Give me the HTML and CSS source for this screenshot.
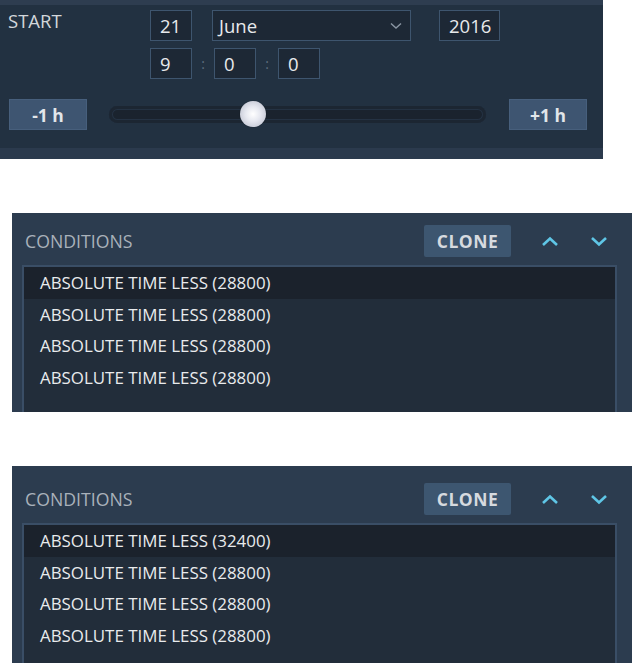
FILE: index.html
```html
<!DOCTYPE html>
<html lang="en">
<head>
    <meta charset="UTF-8">
    <meta name="viewport" content="width=device-width, initial-scale=1.0">
    <title>Trigger conditions</title>
    <link rel="stylesheet" href="styles.css">
</head>
<body>
    <section class="start-panel">
        <div class="start-body">
            <div class="start-head">
                <div class="start-label">START</div>
                <div class="fields">
                    <div class="field-row">
                        <div class="field field-day">21</div>
                        <div class="field field-month">
                            June
                            <svg class="caret" width="12" height="8" viewBox="0 0 12 8">
                                <path d="M1 1.5 L6 6 L11 1.5" fill="none" stroke="#8a96a3" stroke-width="1.4"/>
                            </svg>
                        </div>
                        <div class="field field-year">2016</div>
                    </div>
                    <div class="field-row">
                        <div class="field field-day">9</div>
                        <span class="colon">:</span>
                        <div class="field field-day">0</div>
                        <span class="colon">:</span>
                        <div class="field field-day">0</div>
                    </div>
                </div>
            </div>

            <div class="slider-row">
                <button class="step-btn">-1 h</button>
                <div class="track">
                    <div class="knob" style="left: 131px"></div>
                </div>
                <button class="step-btn">+1 h</button>
            </div>
        </div>
    </section>

    <section class="cond-panel">
        <div class="cond-head">
            <span class="cond-title">CONDITIONS</span>
            <button class="clone-btn">CLONE</button>
            <svg class="arrow" width="18" height="11" viewBox="0 0 18 11">
                <path d="M2 9 L9 2.5 L16 9" fill="none" stroke="#5fc6e6" stroke-width="2.6"/>
            </svg>
            <svg class="arrow" width="18" height="11" viewBox="0 0 18 11">
                <path d="M2 2 L9 8.5 L16 2" fill="none" stroke="#5fc6e6" stroke-width="2.6"/>
            </svg>
        </div>
        <ul class="cond-list">
            <li class="selected">ABSOLUTE TIME LESS (28800)</li>
            <li>ABSOLUTE TIME LESS (28800)</li>
            <li>ABSOLUTE TIME LESS (28800)</li>
            <li>ABSOLUTE TIME LESS (28800)</li>
            <li></li>
        </ul>
    </section>

    <section class="cond-panel cond-panel-lower">
        <div class="cond-head">
            <span class="cond-title">CONDITIONS</span>
            <button class="clone-btn">CLONE</button>
            <svg class="arrow" width="18" height="11" viewBox="0 0 18 11">
                <path d="M2 9 L9 2.5 L16 9" fill="none" stroke="#5fc6e6" stroke-width="2.6"/>
            </svg>
            <svg class="arrow" width="18" height="11" viewBox="0 0 18 11">
                <path d="M2 2 L9 8.5 L16 2" fill="none" stroke="#5fc6e6" stroke-width="2.6"/>
            </svg>
        </div>
        <ul class="cond-list">
            <li class="selected">ABSOLUTE TIME LESS (32400)</li>
            <li>ABSOLUTE TIME LESS (28800)</li>
            <li>ABSOLUTE TIME LESS (28800)</li>
            <li>ABSOLUTE TIME LESS (28800)</li>
            <li></li>
        </ul>
    </section>
</body>
</html>
```

FILE: styles.css
```css
* {
    margin: 0;
    padding: 0;
    box-sizing: border-box;
}

body {
    font-family: 'Open Sans', 'DejaVu Sans', sans-serif;
    background: white;
    width: 632px;
    height: 663px;
    overflow: hidden;
}

/* start time block */

.start-panel {
    width: 603px;
    height: 159px;
    background: #223141;
    border-top: 5px solid #2e3d50;
    border-bottom: 11px solid #2b3a4d;
}

.start-body {
    padding: 5px 16px 0 8px;
}

.start-head {
    display: flex;
}

.start-label {
    width: 142px;
    color: #d3d7db;
    font-size: 18.5px;
    line-height: 22px;
}

.fields {
    display: flex;
    flex-direction: column;
    gap: 7px;
}

.field-row {
    display: flex;
    align-items: center;
}

.field {
    height: 31px;
    border: 1px solid #3e556e;
    background: #1d2835;
    color: #e8eaec;
    font-size: 18.5px;
    line-height: 29px;
    padding-left: 9px;
}

.field-day {
    width: 42px;
}

.field-month {
    width: 199px;
    margin-left: 20px;
    padding-left: 6px;
    display: flex;
    justify-content: space-between;
    align-items: center;
    padding-right: 8px;
}

.field-year {
    width: 61px;
    margin-left: 28px;
}

.colon {
    width: 22px;
    text-align: center;
    color: #5d6d7e;
    font-size: 14px;
}

.slider-row {
    display: flex;
    align-items: center;
    margin-top: 20px;
    padding-left: 1px;
}

.step-btn {
    width: 78px;
    height: 31px;
    background: #3e5571;
    border: 1px solid #475f7c;
    color: #e2e6ea;
    font-family: inherit;
    font-size: 17.5px;
    font-weight: 700;
}

.track {
    position: relative;
    width: 377px;
    height: 17px;
    margin: 0 23px 0 22px;
    border-radius: 9px;
    background: #1a232e;
    box-shadow: inset 0 0 0 3px #1c2632, inset 0 0 0 4px #243243;
}

.knob {
    position: absolute;
    top: -5px;
    width: 26px;
    height: 26px;
    border-radius: 50%;
    background: radial-gradient(circle at 50% 50%, #ffffff 0%, #e6e8f0 40%, #b5b9c8 100%);
    box-shadow: 0 0 1px rgba(0, 0, 0, 0.5);
}

/* conditions list */

.cond-panel {
    margin: 54px 0 0 12px;
    width: 620px;
    height: 199px;
    background: #2c3c4f;
    overflow: hidden;
    padding: 12px 15px 0 10px;
}

.cond-panel-lower {
    padding-top: 17px;
}

.cond-head {
    display: flex;
    align-items: center;
    height: 32px;
    padding-left: 3px;
    padding-right: 9px;
}

.cond-title {
    flex: 1;
    color: #a9b1ba;
    font-size: 17.7px;
}

.clone-btn {
    width: 87px;
    height: 32px;
    border: none;
    border-radius: 2px;
    background: #3d5670;
    color: #d6dadf;
    font-family: inherit;
    font-size: 17.5px;
    font-weight: 700;
    letter-spacing: 0.5px;
}

.arrow {
    margin-left: 30px;
}

.arrow + .arrow {
    margin-left: 31px;
}

.cond-list {
    list-style: none;
    margin-top: 8px;
    border: 2px solid #3a4e66;
    background: #222d3a;
    height: 160px;
}

.cond-list li {
    height: 31.5px;
    padding-left: 16px;
    color: #e9ebed;
    font-size: 16.9px;
    line-height: 31.5px;
}

.cond-list li.selected {
    background: #1b222c;
}
```
